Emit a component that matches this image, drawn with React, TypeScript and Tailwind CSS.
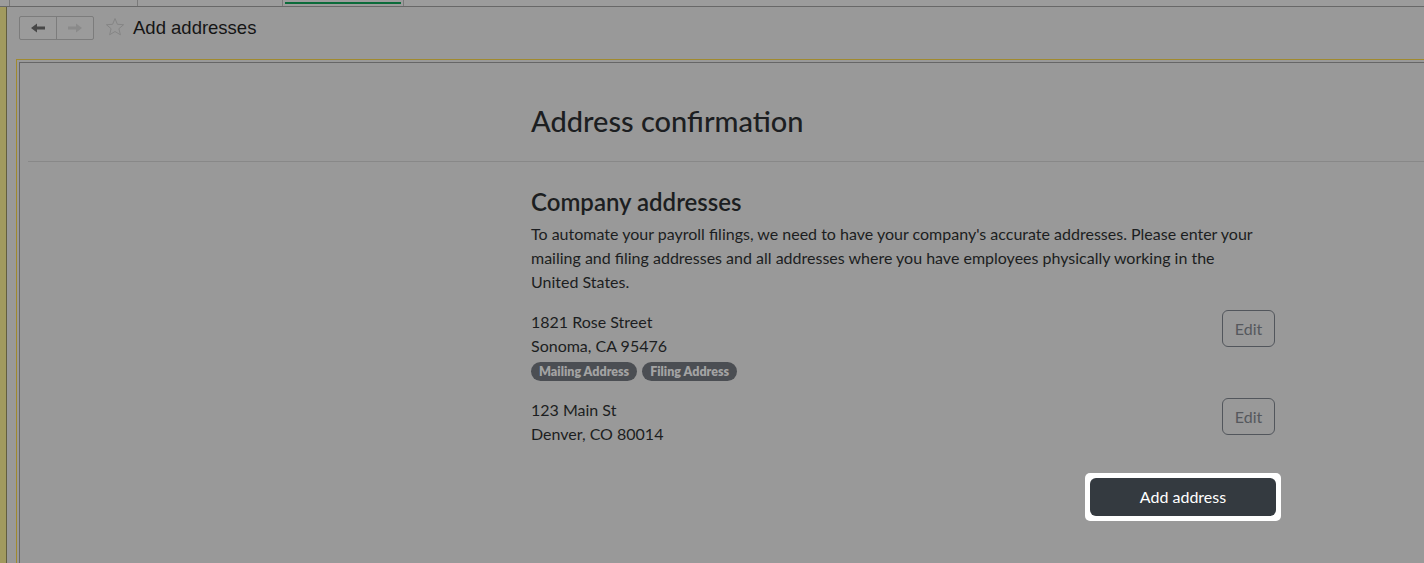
import React from "react";

function Arrow({ dir, color }: { dir: "left" | "right"; color: string }) {
  return (
    <svg width="16" height="10" viewBox="0 0 16 10" style={{ transform: dir === "right" ? "scaleX(-1)" : undefined }}>
      <path d="M1 5 L7 0.5 L7 3.5 L15 3.5 L15 6.5 L7 6.5 L7 9.5 Z" fill={color} />
    </svg>
  );
}

function Star() {
  return (
    <svg width="20" height="20" viewBox="0 0 20 20">
      <path
        d="M10 1.5 L12.4 7.3 L18.6 7.7 L13.9 11.7 L15.4 17.8 L10 14.5 L4.6 17.8 L6.1 11.7 L1.4 7.7 L7.6 7.3 Z"
        fill="none"
        stroke="#858585"
        strokeWidth="1"
        strokeLinejoin="round"
      />
    </svg>
  );
}

export default function App() {
  const sans = { fontFamily: "Lato, 'Noto Sans', sans-serif" };
  return (
    <div className="w-[1424px] h-[563px] bg-[#999999] flex flex-col overflow-hidden" style={sans}>
      {/* tab strip */}
      <div className="h-[7px] border-b border-[#686868] flex shrink-0 bg-[#9c9c9c]">
        <div className="w-[10px] border-r border-[#7a7a7a]" />
        <div className="w-[128px] border-r border-[#7a7a7a]" />
        <div className="w-[145px] border-r border-[#7a7a7a]" />
        <div className="w-[121px] border-r border-[#7a7a7a] pt-[2px] px-[2px]">
          <div className="h-[2px] bg-[#0b6b3a]" />
        </div>
      </div>
      <div className="flex flex-1 min-h-0">
        {/* left stripe */}
        <div className="w-[7px] bg-[#a19a5f] border-r border-[#615d40] shrink-0" />
        <div className="flex-1 flex flex-col min-w-0">
          {/* header */}
          <div className="h-[52px] flex items-start pt-[9px] pl-[12px] shrink-0">
            <div className="flex h-[24px] border border-[#7c7c7c] rounded-[2px] bg-[#9b9b9b]">
              <div className="w-[37px] flex items-center justify-center border-r border-[#7c7c7c]">
                <Arrow dir="left" color="#474747" />
              </div>
              <div className="w-[36px] flex items-center justify-center">
                <Arrow dir="right" color="#8a8a8a" />
              </div>
            </div>
            <div className="ml-[11px] mt-[1px]">
              <Star />
            </div>
            <div
              className="ml-[8px] text-[18.5px] leading-[24px] text-[#151515]"
              style={{ fontFamily: "'Liberation Sans', Arial, sans-serif" }}
            >
              Add addresses
            </div>
          </div>
          {/* frame */}
          <div className="flex-1 ml-[9px] border-t border-l border-[#a08a2e] pt-[2px] pl-[2px] min-h-0">
            <div className="h-full border-t border-l border-[#666666]">
              <div className="h-[98px] pl-[511px] pt-[40px]">
                <h1 className="text-[29px] leading-[36px] font-medium text-[#1c1e21]">Address confirmation</h1>
              </div>
              <div className="ml-[8px] border-t border-[#888888]" />
              <div className="pl-[511px] pt-[24px] w-[1255px]">
                <h2 className="text-[24px] leading-[32px] font-semibold text-[#1c1e21]">Company addresses</h2>
                <p className="text-[16px] leading-[24px] text-[#1c1e21] mt-[4px] pr-[16px]">
                  To automate your payroll filings, we need to have your company's accurate addresses. Please enter your
                  mailing and filing addresses and all addresses where you have employees physically working in the
                  United States.
                </p>
                <div className="mt-[16px] flex justify-between items-start">
                  <div>
                    <div className="text-[16px] leading-[24px] text-[#1c1e21]">1821 Rose Street</div>
                    <div className="text-[16px] leading-[24px] text-[#1c1e21]">Sonoma, CA 95476</div>
                    <div className="flex gap-[5px] mt-[4px]">
                      <span className="h-[19px] px-[8px] rounded-full bg-[#4b4e53] text-[#a3a3a3] text-[12.5px] leading-[19px] font-extrabold">
                        Mailing Address
                      </span>
                      <span className="h-[19px] px-[8px] rounded-full bg-[#4b4e53] text-[#a3a3a3] text-[12.5px] leading-[19px] font-extrabold">
                        Filing Address
                      </span>
                    </div>
                  </div>
                  <button className="w-[53px] h-[37px] border border-[#52565c] rounded-[6px] text-[16px] text-[#55585d]">
                    Edit
                  </button>
                </div>
                <div className="mt-[17px] flex justify-between items-start">
                  <div>
                    <div className="text-[16px] leading-[24px] text-[#1c1e21]">123 Main St</div>
                    <div className="text-[16px] leading-[24px] text-[#1c1e21]">Denver, CO 80014</div>
                  </div>
                  <button className="w-[53px] h-[37px] border border-[#52565c] rounded-[6px] text-[16px] text-[#55585d]">
                    Edit
                  </button>
                </div>
                <div className="mt-[27px] flex justify-end mr-[-6px]">
                  <div className="bg-white p-[5px] rounded-[5px]">
                    <button className="w-[186px] h-[38px] bg-[#343a40] rounded-[6px] text-white text-[16px]">
                      Add address
                    </button>
                  </div>
                </div>
              </div>
            </div>
          </div>
        </div>
      </div>
    </div>
  );
}
